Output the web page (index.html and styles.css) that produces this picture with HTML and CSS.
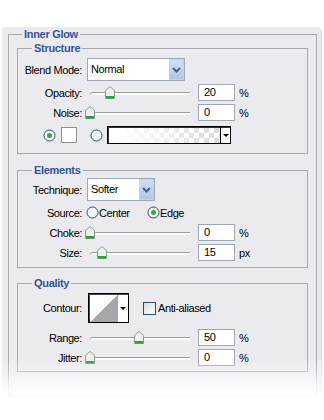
FILE: index.html
```html
<!DOCTYPE html>
<html>
<head>
<meta charset="utf-8">
<link rel="stylesheet" href="styles.css">
</head>
<body>
<div class="panel">
  <fieldset class="group outer">
    <legend>Inner Glow</legend>

    <fieldset class="group sub structure">
      <legend>Structure</legend>
      <div class="row r-select">
        <span class="lbl">Blend Mode:</span>
        <div class="select w-blend"><span class="val">Normal</span><span class="btn"><svg width="9" height="6" viewBox="0 0 9 6"><path d="M1 1 L4.5 4.5 L8 1" fill="none" stroke="#4a5f86" stroke-width="2"/></svg></span></div>
      </div>
      <div class="row">
        <span class="lbl">Opacity:</span>
        <div class="slider"><div class="track"></div><svg class="thumb" style="left:20%" width="10" height="13" viewBox="0 0 10 13"><path d="M0.5 4.5 L5 0.5 L9.5 4.5 V12.5 H0.5 Z" fill="#eef2ee" stroke="#8d9a92"/><rect x="1" y="10" width="8" height="2.5" fill="#2f9d42"/></svg></div>
        <div class="num">20</div><span class="unit">%</span>
      </div>
      <div class="row">
        <span class="lbl">Noise:</span>
        <div class="slider"><div class="track"></div><svg class="thumb" style="left:0%" width="10" height="13" viewBox="0 0 10 13"><path d="M0.5 4.5 L5 0.5 L9.5 4.5 V12.5 H0.5 Z" fill="#eef2ee" stroke="#8d9a92"/><rect x="1" y="10" width="8" height="2.5" fill="#2f9d42"/></svg></div>
        <div class="num">0</div><span class="unit">%</span>
      </div>
      <div class="row r-color">
        <svg class="radio" width="13" height="13" viewBox="0 0 13 13"><circle cx="6.5" cy="6.5" r="5.5" fill="#f4f4f2" stroke="#2d4a70"/><circle cx="6.5" cy="6.5" r="2.5" fill="#36a83c"/></svg>
        <span class="swatch"></span>
        <svg class="radio r2" width="13" height="13" viewBox="0 0 13 13"><circle cx="6.5" cy="6.5" r="5.5" fill="#f4f4f2" stroke="#2d4a70"/></svg>
        <div class="grad"><span class="gfill"></span><span class="garr"></span></div>
      </div>
    </fieldset>

    <fieldset class="group sub elements">
      <legend>Elements</legend>
      <div class="row r-select">
        <span class="lbl">Technique:</span>
        <div class="select w-tech"><span class="val">Softer</span><span class="btn"><svg width="9" height="6" viewBox="0 0 9 6"><path d="M1 1 L4.5 4.5 L8 1" fill="none" stroke="#4a5f86" stroke-width="2"/></svg></span></div>
      </div>
      <div class="row">
        <span class="lbl lbl-src">Source:</span>
        <span class="opt opt1"><svg class="radio" width="13" height="13" viewBox="0 0 13 13"><circle cx="6.5" cy="6.5" r="5.5" fill="#f4f4f2" stroke="#2d4a70"/></svg><span>Center</span></span>
        <span class="opt"><svg class="radio" width="13" height="13" viewBox="0 0 13 13"><circle cx="6.5" cy="6.5" r="5.5" fill="#f4f4f2" stroke="#2d4a70"/><circle cx="6.5" cy="6.5" r="2.5" fill="#36a83c"/></svg><span>Edge</span></span>
      </div>
      <div class="row">
        <span class="lbl">Choke:</span>
        <div class="slider"><div class="track"></div><svg class="thumb" style="left:0%" width="10" height="13" viewBox="0 0 10 13"><path d="M0.5 4.5 L5 0.5 L9.5 4.5 V12.5 H0.5 Z" fill="#eef2ee" stroke="#8d9a92"/><rect x="1" y="10" width="8" height="2.5" fill="#2f9d42"/></svg></div>
        <div class="num">0</div><span class="unit">%</span>
      </div>
      <div class="row">
        <span class="lbl">Size:</span>
        <div class="slider"><div class="track"></div><svg class="thumb" style="left:12%" width="10" height="13" viewBox="0 0 10 13"><path d="M0.5 4.5 L5 0.5 L9.5 4.5 V12.5 H0.5 Z" fill="#eef2ee" stroke="#8d9a92"/><rect x="1" y="10" width="8" height="2.5" fill="#2f9d42"/></svg></div>
        <div class="num">15</div><span class="unit">px</span>
      </div>
    </fieldset>

    <fieldset class="group sub quality">
      <legend>Quality</legend>
      <div class="row r-contour">
        <span class="lbl">Contour:</span>
        <div class="contour"><span class="cprev"></span><span class="carr"></span></div>
        <span class="check"></span><span class="chk-lbl">Anti-aliased</span>
      </div>
      <div class="row r-range">
        <span class="lbl">Range:</span>
        <div class="slider"><div class="track"></div><svg class="thumb" style="left:49%" width="10" height="13" viewBox="0 0 10 13"><path d="M0.5 4.5 L5 0.5 L9.5 4.5 V12.5 H0.5 Z" fill="#eef2ee" stroke="#8d9a92"/><rect x="1" y="10" width="8" height="2.5" fill="#2f9d42"/></svg></div>
        <div class="num">50</div><span class="unit">%</span>
      </div>
      <div class="row">
        <span class="lbl">Jitter:</span>
        <div class="slider"><div class="track"></div><svg class="thumb" style="left:0%" width="10" height="13" viewBox="0 0 10 13"><path d="M0.5 4.5 L5 0.5 L9.5 4.5 V12.5 H0.5 Z" fill="#eef2ee" stroke="#8d9a92"/><rect x="1" y="10" width="8" height="2.5" fill="#2f9d42"/></svg></div>
        <div class="num">0</div><span class="unit">%</span>
      </div>
    </fieldset>
  </fieldset>
</div>
</body>
</html>
```
FILE: styles.css
```css
* { box-sizing: border-box; }
html, body { margin: 0; background: #fff; }
body {
  font-family: "Liberation Sans", Arial, sans-serif;
  font-size: 11px;
  letter-spacing: -0.4px;
  color: #000;
}
.panel {
  position: relative;
  margin: 27px 0 0 2px;
  width: 319px;
  background: #ebeaef;
  border-radius: 3px 5px 0 0;
  padding: 0 0 4px 6px;
  box-shadow: 1px 0 0 #dddce2;
}
.panel::after {
  content: "";
  position: absolute;
  left: -2px;
  right: -2px;
  bottom: 0;
  height: 42px;
  background: linear-gradient(rgba(255,255,255,0), rgba(255,255,255,0.85) 70%, #fff);
}
.group {
  margin: 0;
  padding: 0 8px;
  border: 1px solid #a9a8ae;
  min-width: 0;
}
.group > legend {
  font-weight: bold;
  font-size: 11px;
  letter-spacing: -0.3px;
  color: #33549a;
  line-height: 14px;
  padding: 0 2px;
}
.outer { width: 309px; padding-bottom: 24px; }
.outer > legend { margin-left: 5px; }
.sub { padding: 0; }
.sub > legend { margin-left: 14px; }
.structure { padding-bottom: 9px; }
.elements { margin-top: 9px; padding-bottom: 6px; }
.quality { margin-top: 8px; padding-bottom: 5px; }

.row {
  display: flex;
  align-items: center;
  height: 17px;
  margin-top: 3px;
}
.elements > .row:first-of-type { margin-top: 1px; }
.r-select { height: 23px; }
.r-color { height: 18px; margin-top: 5px; padding-left: 25px; }
.r-contour { height: 30px; }
.r-range { margin-top: 6px; }

.lbl {
  flex: none;
  width: 65px;
  text-align: right;
  padding-right: 1px;
  margin-right: 4px;
}
.lbl-src { margin-right: 3px; }

.select {
  display: flex;
  height: 23px;
  border: 1px solid #9fa8b5;
  background: #fff;
}
.w-blend { width: 98px; }
.w-tech { width: 68px; }
.select .val { flex: 1; padding-left: 3px; line-height: 21px; }
.select .btn {
  width: 15px;
  display: flex;
  align-items: center;
  justify-content: center;
  background: linear-gradient(#d3def3, #b3c5e5);
  border: 1px solid #c6d2e8;
}

.slider {
  position: relative;
  flex: none;
  width: 100px;
  height: 17px;
  margin: 0 8px 0 3px;
}
.track {
  margin-top: 8px;
  height: 3px;
  border-top: 1px solid #9c9ca2;
  border-left: 1px solid #b0b0b4;
  border-radius: 2px 0 0 2px;
  background: #fbfbf8;
}
.thumb {
  position: absolute;
  top: 2px;
  margin-left: -5px;
}
.num {
  flex: none;
  width: 37px;
  height: 17px;
  border: 1px solid #a0a8b4;
  background: #fff;
  padding-left: 5px;
  line-height: 15px;
}
.unit { margin-left: 4px; }

.radio { flex: none; display: block; }
.swatch {
  flex: none;
  width: 16px;
  height: 16px;
  margin-left: 5px;
  background: #fff;
  border: 1px solid #8f8f95;
}
.r2 { margin-left: 13px; }
.grad {
  flex: none;
  display: flex;
  width: 124px;
  height: 18px;
  margin-left: 4px;
  border: 1px solid #000;
  box-shadow: inset 1px 1px 0 #333;
  background: #fff;
}
.gfill {
  flex: 1;
  margin: 1px 0 0 1px;
  background:
    linear-gradient(to right, #fff 8%, rgba(255,255,255,0.2) 100%),
    repeating-conic-gradient(#d2d2d2 0 25%, #fff 0 50%) 0 0 / 10px 10px;
}
.garr {
  width: 10px;
  border-left: 1px solid #000;
  display: flex;
  align-items: center;
  justify-content: center;
}
.garr::before {
  content: "";
  border-left: 3px solid transparent;
  border-right: 3px solid transparent;
  border-top: 3px solid #000;
}

.opt { display: flex; align-items: center; }
.opt1 { width: 61px; }

.contour {
  flex: none;
  display: flex;
  width: 41px;
  height: 30px;
  margin-left: 1px;
  border: 1px solid #000;
  box-shadow: inset 1px 1px 0 #444;
  background: #fff;
}
.cprev {
  flex: 1;
  margin: 1px 0 0 1px;
  background: linear-gradient(to top left, #a7a7ab 50%, #fff 50%);
}
.carr {
  width: 10px;
  display: flex;
  align-items: center;
  justify-content: center;
}
.carr::before {
  content: "";
  border-left: 3px solid transparent;
  border-right: 3px solid transparent;
  border-top: 3px solid #000;
}
.check {
  flex: none;
  width: 13px;
  height: 13px;
  margin-left: 14px;
  border: 1px solid #2d4a70;
  background: linear-gradient(135deg, #dcdcd7, #fff);
}
.chk-lbl { margin-left: 2px; }
```
